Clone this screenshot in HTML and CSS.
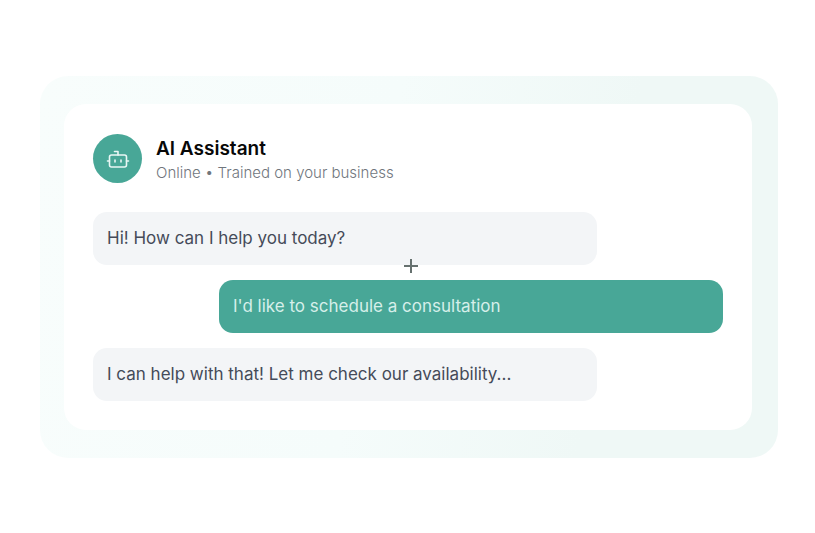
FILE: index.html
```html
<!DOCTYPE html>
<html lang="en">
<head>
<meta charset="utf-8">
<meta name="viewport" content="width=device-width, initial-scale=1">
<title>AI Assistant</title>
<link rel="stylesheet" href="styles.css">
</head>
<body>
<main class="frame">
  <section class="card">
    <header class="header">
      <span class="avatar">
        <svg class="bot" viewBox="0 0 24 24" aria-hidden="true"><path d="M12 8V4.500H8.500"/><rect x="3.500" y="8" width="17" height="12" rx="2"/><path d="M1.500 14h2M20.500 14h2M15 13v2M9 13v2"/></svg>
      </span>
      <div>
        <h1 class="title">AI Assistant</h1>
        <p class="status">Online • Trained on your business</p>
      </div>
    </header>
    <div class="messages">
      <p class="message">Hi! How can I help you today?</p>
      <p class="message message-user">I'd like to schedule a consultation
        <svg class="cursor" viewBox="0 0 14 14" aria-hidden="true"><path d="M7 0v14M0 7h14"/></svg>
      </p>
      <p class="message">I can help with that! Let me check our availability...</p>
    </div>
  </section>
</main>
</body>
</html>
```
FILE: styles.css
```css
* { box-sizing: border-box; }
body {
  margin: 0;
  padding: 76px 37px 75px 40px;
  background: #fff;
  font-family: Inter, sans-serif;
}
h1, p { margin: 0; }
.frame {
  padding: 28px 26px 28px 24px;
  border-radius: 28px;
  background: linear-gradient(100deg, #f8fdfc, #f5fcfb 45%, #eff8f6 75%);
}
.card {
  padding: 30px 29px 29px;
  border-radius: 22px;
  background: #fff;
}
.header {
  display: flex;
  align-items: center;
  gap: 14px;
  margin-bottom: 29px;
}
.avatar {
  display: flex;
  align-items: center;
  justify-content: center;
  width: 49px;
  height: 49px;
  border-radius: 50%;
  background: #48a797;
}
.bot {
  width: 24px;
  height: 24px;
  fill: none;
  stroke: #e9f7f5;
  stroke-width: 1.6;
  stroke-linecap: round;
  stroke-linejoin: round;
}
.title {
  font-size: 19px;
  font-weight: 580;
  line-height: 27px;
  color: #080808;
}
.status {
  font-size: 15px;
  font-weight: 350;
  line-height: 21px;
  color: #70767d;
}
.messages {
  display: flex;
  flex-direction: column;
  gap: 15px;
}
.message {
  position: relative;
  width: 80%;
  padding: 14px;
  border-radius: 14px;
  background: #f3f5f7;
  font-size: 17px;
  line-height: 25px;
  color: #454b59;
}
.message-user {
  align-self: flex-end;
  background: #48a797;
  color: #d6efea;
}
.cursor {
  position: absolute;
  top: -21px;
  left: 185px;
  width: 14px;
  height: 14px;
  fill: none;
  stroke: #66716f;
  stroke-width: 2;
}
```
